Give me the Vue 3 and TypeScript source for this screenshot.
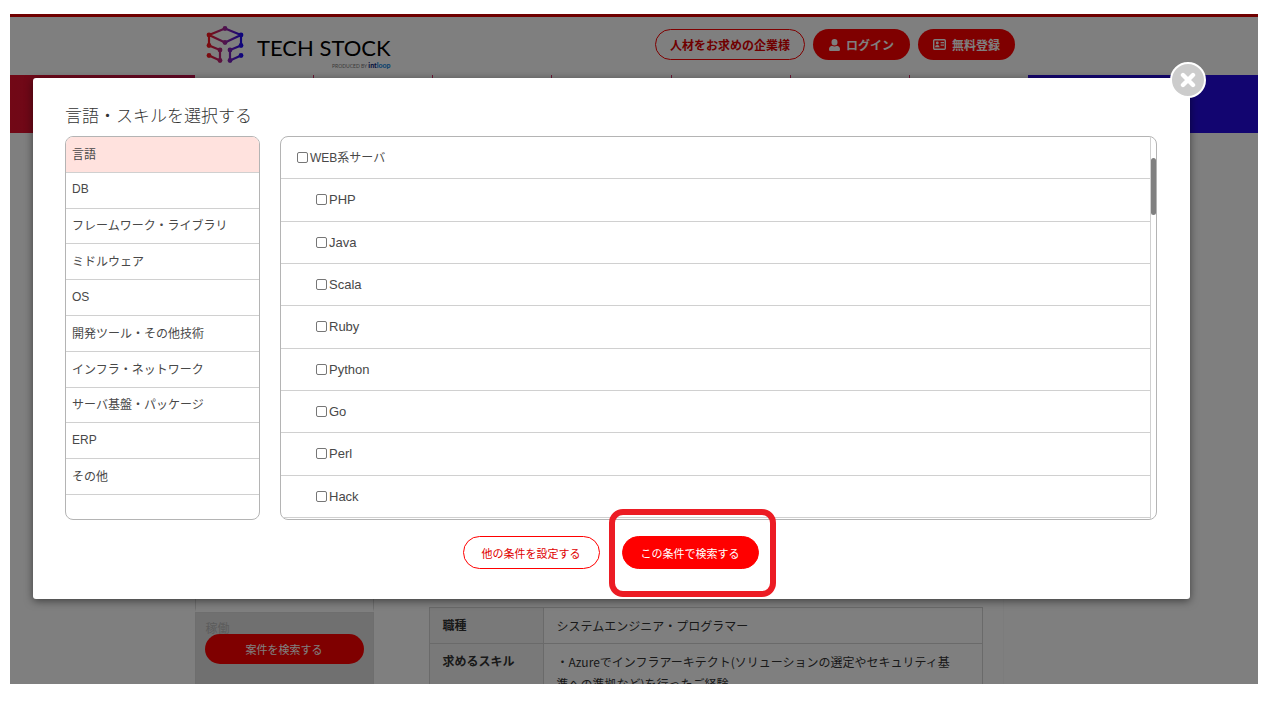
<script setup lang="ts">
import { ref } from 'vue'

const categories = [
  '言語',
  'DB',
  'フレームワーク・ライブラリ',
  'ミドルウェア',
  'OS',
  '開発ツール・その他技術',
  'インフラ・ネットワーク',
  'サーバ基盤・パッケージ',
  'ERP',
  'その他',
]
const active = ref('言語')

interface Skill {
  id: string
  label: string
  group?: boolean
}
const skills: Skill[] = [
  { id: 'web', label: 'WEB系サーバ', group: true },
  { id: 'php', label: 'PHP' },
  { id: 'java', label: 'Java' },
  { id: 'scala', label: 'Scala' },
  { id: 'ruby', label: 'Ruby' },
  { id: 'python', label: 'Python' },
  { id: 'go', label: 'Go' },
  { id: 'perl', label: 'Perl' },
  { id: 'hack', label: 'Hack' },
]
const selected = ref<string[]>([])
</script>

<template>
  <div class="page">
    <div class="stage">
      <header class="header">
        <div class="container header-row">
          <a class="logo" href="#">
            <svg class="logo-mark" viewBox="0 0 38 38" aria-hidden="true">
              <defs>
                <linearGradient id="mark" gradientUnits="userSpaceOnUse" x1="1" y1="0" x2="37" y2="0">
                  <stop offset="0" stop-color="#ff1414" />
                  <stop offset="0.5" stop-color="#a0289c" />
                  <stop offset="1" stop-color="#1408ff" />
                </linearGradient>
              </defs>
              <g fill="none" stroke="url(#mark)" stroke-width="2.2" stroke-linejoin="round">
                <path d="M3 9L19 2.500L35 9L19 16.500Z" />
                <path d="M3 9V19.500L14 24V34.500L3 29.500" />
                <path d="M35 9V19.500L24 24V34.500L35 29.500" />
              </g>
              <g fill="url(#mark)">
                <circle cx="3" cy="9" r="2.400" />
                <circle cx="19" cy="2.500" r="2.400" />
                <circle cx="35" cy="9" r="2.400" />
                <circle cx="19" cy="16.500" r="2.400" />
                <circle cx="3" cy="19.500" r="2.400" />
                <circle cx="14" cy="24" r="2.400" />
                <circle cx="14" cy="34.500" r="2.400" />
                <circle cx="3" cy="29.500" r="2.400" />
                <circle cx="35" cy="19.500" r="2.400" />
                <circle cx="24" cy="24" r="2.400" />
                <circle cx="24" cy="34.500" r="2.400" />
                <circle cx="35" cy="29.500" r="2.400" />
              </g>
            </svg>
            <span class="logo-text">
              <span class="logo-name">TECH STOCK</span>
              <span class="logo-by">PRODUCED BY <b>int<i>loop</i></b></span>
            </span>
          </a>
          <div class="actions">
            <a class="pill outline" href="#">人材をお求めの企業様</a>
            <a class="pill" href="#">
              <svg class="icon-user" viewBox="0 0 11 12" aria-hidden="true">
                <path fill="currentColor" d="M5.500 0a3 3.200 0 0 1 0 6.400a3 3.200 0 0 1 0-6.400ZM3 6.800Q5.500 8.200 8 6.800Q11 7.300 11 10.500Q11 12 9.800 12H1.200Q0 12 0 10.500Q0 7.300 3 6.800Z" />
              </svg>
              ログイン
            </a>
            <a class="pill" href="#">
              <svg class="icon-card" viewBox="0 0 13 11" aria-hidden="true">
                <rect x="0.700" y="0.700" width="11.600" height="9.600" rx="1" fill="none" stroke="currentColor" stroke-width="1.400" />
                <circle cx="4.300" cy="4" r="1.400" fill="currentColor" />
                <path d="M2 8.200Q2 6 4.300 6T6.600 8.200ZM7.600 3H11V4.200H7.600ZM7.600 5.600H11V6.800H7.600Z" fill="currentColor" />
              </svg>
              無料登録
            </a>
          </div>
        </div>
      </header>
      <div class="nav">
        <nav class="container nav-inner">
          <span v-for="n in 7" :key="n" class="nav-cell"></span>
        </nav>
      </div>
      <div class="container content">
        <aside class="sidebar">
          <div class="side-box"></div>
          <div class="side-search">
            <span class="side-label">稼働</span>
            <button type="button" class="side-button">案件を検索する</button>
          </div>
        </aside>
        <main class="main">
          <table class="job">
            <tbody>
              <tr>
                <th scope="row">職種</th>
                <td>システムエンジニア・プログラマー</td>
              </tr>
              <tr>
                <th scope="row">求めるスキル</th>
                <td>・Azureでインフラアーキテクト(ソリューションの選定やセキュリティ基準への準拠など)を行ったご経験</td>
              </tr>
            </tbody>
          </table>
        </main>
      </div>

      <div class="overlay">
        <section class="modal" role="dialog" aria-labelledby="modal-title">
          <button type="button" class="close" aria-label="閉じる">
            <svg viewBox="0 0 16 16" aria-hidden="true">
              <path d="M3 3L13 13M13 3L3 13" stroke="#fff" stroke-width="4.400" stroke-linecap="round" />
            </svg>
          </button>
          <h2 id="modal-title">言語・スキルを選択する</h2>
          <div class="panels">
            <div class="categories">
              <button
                v-for="c in categories"
                :key="c"
                type="button"
                class="category"
                :class="{ active: c === active }"
                @click="active = c"
              >{{ c }}</button>
            </div>
            <div class="skills">
              <div class="skill-list">
                <label v-for="s in skills" :key="s.id" class="skill" :class="{ group: s.group }">
                  <input v-model="selected" type="checkbox" :value="s.id" />
                  <span>{{ s.label }}</span>
                </label>
              </div>
              <div class="track"><div class="thumb"></div></div>
            </div>
          </div>
          <div class="footer">
            <button type="button" class="action outline">他の条件を設定する</button>
            <div class="marked">
              <button type="button" class="action">この条件で検索する</button>
            </div>
          </div>
        </section>
      </div>
    </div>
  </div>
</template>

<style>
body {
  margin: 0;
  background: #fff;
}
</style>

<style scoped>
* {
  box-sizing: border-box;
}
.page {
  height: 100vh;
  padding: 14px 16px 18px 10px;
  display: flex;
  font-family: "Liberation Sans", "Noto Sans CJK JP", sans-serif;
  font-size: 12px;
  color: #333;
}
button {
  font: inherit;
  color: inherit;
  cursor: pointer;
}
.stage {
  position: relative;
  flex: 1;
  min-width: 0;
  overflow: hidden;
  background: #fff;
}
.header {
  height: 61px;
  border-top: 3px solid #e00000;
  padding-right: 45px;
}
.container {
  max-width: 833px;
  margin: 0 auto;
}
.header-row {
  height: 100%;
  display: flex;
  justify-content: space-between;
  align-items: flex-start;
  padding: 9px 13px 0 11px;
}
.logo {
  display: flex;
  gap: 13px;
  color: #000;
  text-decoration: none;
}
.logo-mark {
  width: 38px;
  height: 38px;
}
.logo-text {
  display: flex;
  flex-direction: column;
  padding-top: 9px;
}
.logo-name {
  font: 22px/26px Lato, sans-serif;
}
.logo-by {
  align-self: flex-end;
  font: 5px/8px Lato, sans-serif;
  color: #777;
}
.logo-by b {
  font: 900 7px/8px Lato, sans-serif;
  color: #102a80;
}
.logo-by i {
  font-style: normal;
  color: #1486dc;
}
.actions {
  display: flex;
  gap: 8px;
  padding-top: 3px;
}
.pill {
  height: 31px;
  display: flex;
  align-items: center;
  gap: 6px;
  padding: 0 16px;
  border-radius: 16px;
  background: #f00;
  color: #fff;
  font-weight: 700;
  text-decoration: none;
}
.pill + .pill + .pill {
  padding: 0 15px;
}
.pill.outline {
  padding: 0 14px;
  border: 1px solid #f00;
  background: #fff;
  color: #e00000;
}
.icon-user {
  width: 11px;
  height: 12px;
}
.icon-card {
  width: 13px;
  height: 11px;
}
.nav {
  height: 58px;
  padding-right: 45px;
  background: linear-gradient(90deg, #e4102c, #240ae0 85%);
}
.nav-inner {
  height: 100%;
  display: flex;
  background: #fff;
}
.nav-cell {
  flex: 1;
}
.nav-cell + .nav-cell {
  border-left: 1px solid #d8306a;
}
.content {
  display: grid;
  grid-template-columns: 179px 596px;
  gap: 34px;
  position: relative;
  right: 23px;
}
.side-box {
  height: 479px;
  border: 1px solid #ddd;
  border-bottom: 4px solid #fff;
}
.side-search {
  position: relative;
  height: 90px;
  padding: 6px 10px;
  background: #e0e0e0;
  border: 1px solid #ddd;
}
.side-label {
  color: #b8b8b8;
  line-height: 20px;
}
.side-button {
  position: absolute;
  top: 21px;
  left: 9px;
  right: 9px;
  height: 30px;
  border: 0;
  border-radius: 15px;
  background: #f00;
  color: #fff;
  font-size: 11px;
}
.main {
  padding: 474px 20px 0 21px;
  border-right: 1px solid #f8f8f8;
}
.job {
  width: 100%;
  border-collapse: collapse;
  line-height: 22px;
}
.job th,
.job td {
  padding: 7px 20px 6px 13px;
  border: 1px solid #d4d4d4;
  text-align: left;
  vertical-align: top;
}
.job th {
  width: 114px;
  padding-right: 0;
  background: #f2f2f2;
}
.job td {
  font-family: "Noto Sans CJK JP", sans-serif;
}
.overlay {
  position: absolute;
  inset: 0;
  padding: 64px 68px 0 23px;
  background: rgba(0, 0, 0, 0.5);
}
.modal {
  position: relative;
  padding: 25px 33px 2px 32px;
  border-radius: 3px;
  background: #fff;
  box-shadow: 0 2px 8px rgba(0, 0, 0, 0.5);
}
.close {
  position: absolute;
  top: -16px;
  right: -16px;
  width: 36px;
  height: 36px;
  display: grid;
  place-items: center;
  padding: 0;
  border: 2px solid #fff;
  border-radius: 50%;
  background: #ccc;
}
.close svg {
  width: 16px;
  height: 16px;
}
h2 {
  margin: 0 0 5px;
  font-size: 17px;
  line-height: 28px;
  font-weight: 300;
}
.panels {
  display: grid;
  grid-template-columns: 195px 1fr;
  gap: 20px;
  height: 384px;
}
.categories,
.skills {
  display: flex;
  border: 1px solid #b4b4b4;
  border-radius: 8px;
  overflow: hidden;
  color: #484848;
}
.categories {
  flex-direction: column;
  padding-bottom: 24px;
}
.category {
  flex: 1;
  padding: 0 6px 2px;
  border: 0;
  border-bottom: 1px solid #d0d0d0;
  background: #fff;
  text-align: left;
}
.category.active {
  background: #ffe2de;
}
.skill-list {
  flex: 1;
  display: flex;
  flex-direction: column;
  padding-bottom: 1px;
  border-right: 1px solid #d0d0d0;
}
.skill {
  flex: 1;
  display: flex;
  align-items: center;
  gap: 2px;
  padding-left: 35px;
  border-bottom: 1px solid #d0d0d0;
  font-size: 13px;
}
.skill.group {
  padding-left: 16px;
  font-size: 12px;
  line-height: 16px;
}
.skill input {
  appearance: none;
  width: 11px;
  height: 11px;
  margin: 0;
  border: 1px solid #767676;
  border-radius: 2px;
  background: #fff;
}
.skill input:checked {
  background: #f00;
}
.track {
  width: 5px;
  padding-top: 21px;
}
.thumb {
  height: 57px;
  border-radius: 3px;
  background: #808080;
}
.footer {
  display: flex;
  justify-content: center;
  align-items: flex-start;
  gap: 9px;
  padding-left: 16px;
}
.action {
  width: 137px;
  height: 33px;
  padding: 0;
  border: 1px solid #f00;
  border-radius: 17px;
  background: #f00;
  color: #fff;
  font-size: 11px;
}
.action.outline {
  margin-top: 16px;
  background: #fff;
  color: #e00000;
}
.marked {
  position: relative;
  margin-top: -11px;
  padding: 21px 11px 22px 7px;
  border: 6px solid #ec1c24;
  border-radius: 14px;
}
</style>
